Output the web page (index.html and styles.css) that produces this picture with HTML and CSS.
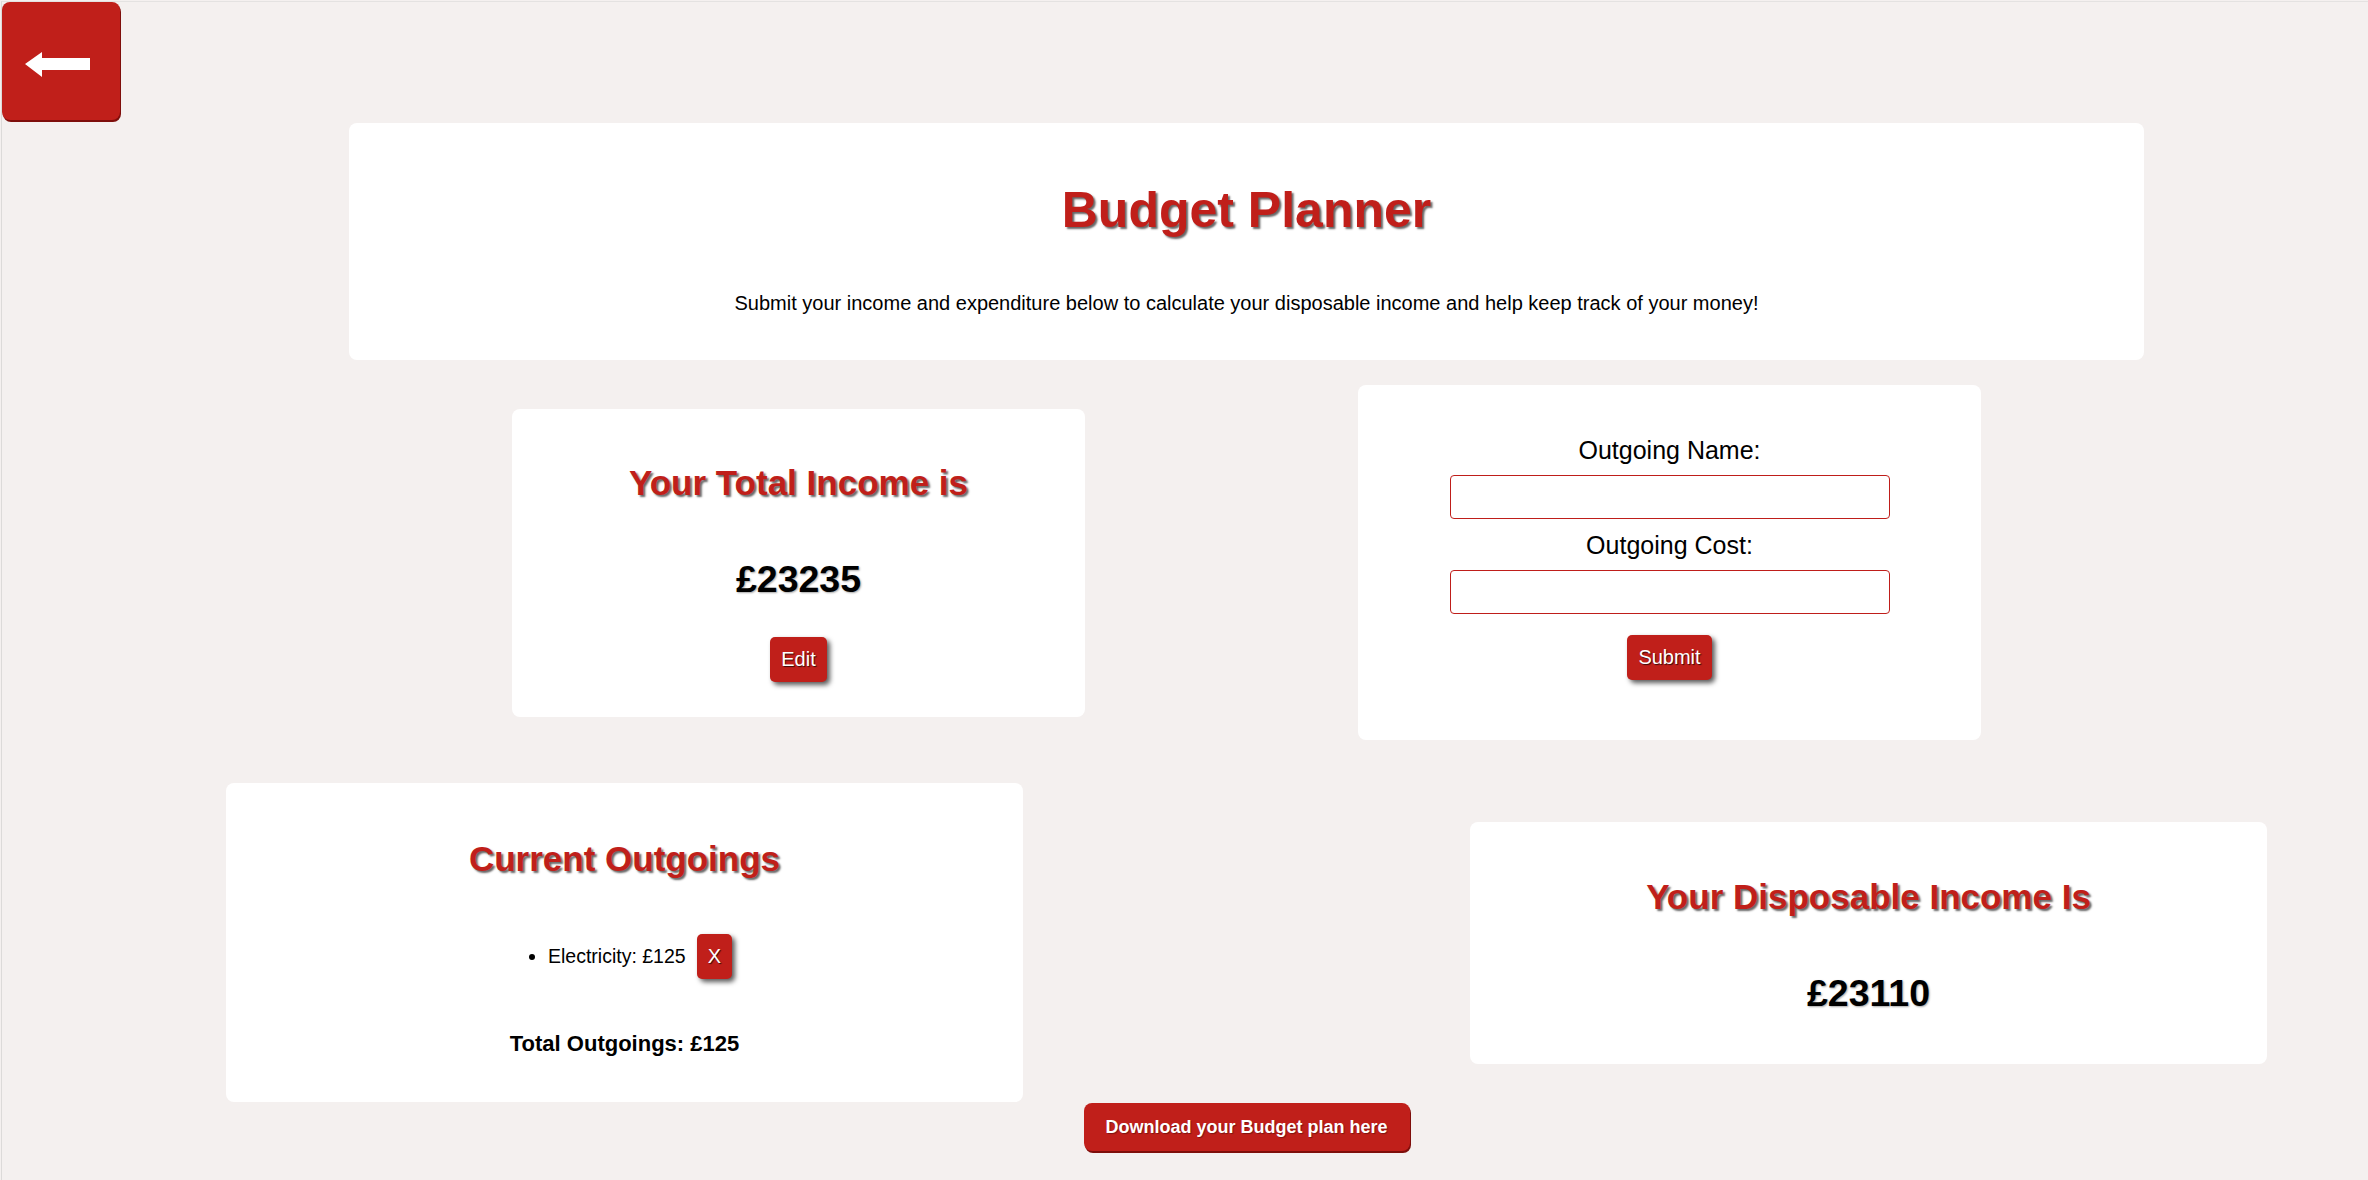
FILE: index.html
```html
<!DOCTYPE html>
<html lang="en">
<head>
<meta charset="utf-8">
<title>Budget Planner</title>
<link rel="stylesheet" href="styles.css">
</head>
<body>
<div class="page">
  <a class="back-btn" href="#" aria-label="Back">
    <svg viewBox="0 0 118 118" width="118" height="118" aria-hidden="true">
      <polygon points="23,62 40,50 40,56 88,56 88,68 40,68 40,75" fill="#ffffff"/>
    </svg>
  </a>
  <main class="main">
    <header class="card intro">
      <h1 class="page-title">Budget Planner</h1>
      <p class="intro-text">Submit your income and expenditure below to calculate your disposable income and help keep track of your money!</p>
    </header>

    <section class="row row-top">
      <div class="card income">
        <h2 class="card-title">Your Total Income is</h2>
        <p class="amount">£23235</p>
        <button class="btn btn-edit" type="button">Edit</button>
      </div>

      <form class="card outgoing-form">
        <label class="field-label" for="oname">Outgoing Name:</label>
        <input class="field-input" id="oname" type="text">
        <label class="field-label field-label-2" for="ocost">Outgoing Cost:</label>
        <input class="field-input" id="ocost" type="text">
        <button class="btn btn-submit" type="button">Submit</button>
      </form>
    </section>

    <section class="row row-bottom">
      <div class="card outgoings">
        <h2 class="card-title">Current Outgoings</h2>
        <ul class="outgoing-list">
          <li class="outgoing-item"><span class="outgoing-text">Electricity: £125</span><button class="btn btn-remove" type="button">X</button></li>
        </ul>
        <p class="total">Total Outgoings: £125</p>
      </div>

      <div class="card disposable">
        <h2 class="card-title">Your Disposable Income Is</h2>
        <p class="amount">£23110</p>
      </div>
    </section>

    <div class="download-wrap">
      <button class="download-btn" type="button">Download your Budget plan here</button>
    </div>
  </main>
</div>
</body>
</html>
```

FILE: styles.css
```css
* {
  box-sizing: border-box;
}

html, body {
  margin: 0;
  padding: 0;
}

body {
  background: #f4f0ef;
  font-family: "Liberation Sans", Arial, sans-serif;
  color: #000;
}

.page {
  margin: 1px 0 0 1px;
  border-left: 1px solid #dcdad9;
  border-top: 1px solid #e4e2e1;
  min-height: 1179px;
}

.back-btn {
  display: block;
  width: 118px;
  height: 118px;
  background: #c01f1a;
  border-radius: 8px;
  box-shadow: 1px 2px 0 #7e0e0b;
}

.back-btn svg {
  display: block;
}

.main {
  margin-left: 123px;
  display: flex;
  flex-direction: column;
  align-items: center;
}

.card {
  background: #ffffff;
  border-radius: 8px;
}

.intro {
  width: 80%;
  margin-top: 3px;
  padding: 59px 20px 45px;
  text-align: center;
}

.page-title {
  margin: 0;
  font-size: 50px;
  line-height: 57px;
  font-weight: bold;
  color: #c01f1a;
  text-shadow: 2px 2px 2px rgba(0, 0, 0, 0.6);
}

.intro-text {
  margin: 53px 0 0;
  font-size: 20px;
  line-height: 23px;
}

.row {
  display: flex;
  justify-content: center;
  align-items: center;
  width: 100%;
}

.row-top {
  margin-top: 25px;
  gap: 273px;
}

.row-bottom {
  margin-top: 43px;
  gap: 447px;
}

.income {
  width: 573px;
  padding: 54px 20px 35px;
  display: flex;
  flex-direction: column;
  align-items: center;
}

.card-title {
  margin: 0;
  font-size: 35px;
  line-height: 40px;
  font-weight: bold;
  color: #c01f1a;
  text-shadow: 2px 2px 2px rgba(0, 0, 0, 0.6);
  text-align: center;
}

.amount {
  margin: 55px 0 0;
  font-size: 37.5px;
  line-height: 43px;
  font-weight: bold;
  text-shadow: 1px 1px 2px rgba(0, 0, 0, 0.35);
  text-align: center;
}

.btn {
  height: 45px;
  padding: 0 11px;
  border: none;
  border-radius: 5px;
  background: #c01f1a;
  color: #ffffff;
  font-family: "Liberation Sans", Arial, sans-serif;
  font-size: 20px;
  text-shadow: 1px 1px 1px rgba(0, 0, 0, 0.7);
  box-shadow: 3px 3px 5px rgba(0, 0, 0, 0.65);
  cursor: pointer;
}

.btn-edit {
  margin-top: 36px;
}

.outgoing-form {
  width: 623px;
  padding: 51px 20px 60px;
  display: flex;
  flex-direction: column;
  align-items: center;
}

.field-label {
  font-size: 25px;
  line-height: 29px;
}

.field-label-2 {
  margin-top: 12px;
}

.field-input {
  margin-top: 10px;
  width: 440px;
  height: 44px;
  border: 1px solid #bf1e1a;
  border-radius: 4px;
  background: #fff;
  font-size: 20px;
  padding: 0 8px;
}

.btn-submit {
  margin-top: 21px;
}

.outgoings {
  width: 797px;
  padding: 56px 20px 46px;
  display: flex;
  flex-direction: column;
  align-items: center;
}

.outgoing-list {
  margin: 55px 0 0;
  padding: 0 0 0 12px;
  list-style: none;
}

.outgoing-item {
  display: flex;
  align-items: center;
  font-size: 19.5px;
}

.outgoing-item::before {
  content: "";
  width: 6px;
  height: 6px;
  border-radius: 50%;
  background: #000;
  margin-right: 13px;
  margin-top: 1px;
}

.btn-remove {
  margin-left: 11px;
}

.total {
  margin: 52px 0 0;
  font-size: 22px;
  line-height: 25px;
  font-weight: bold;
}

.disposable {
  width: 797px;
  padding: 55px 20px 49px;
}

.download-wrap {
  margin-top: 1px;
  display: flex;
  justify-content: center;
}

.download-btn {
  width: 326px;
  height: 48px;
  border: none;
  border-radius: 8px;
  background: #c01f1a;
  color: #fff;
  font-family: "Liberation Sans", Arial, sans-serif;
  font-size: 18px;
  font-weight: bold;
  text-shadow: 1px 1px 1px rgba(0, 0, 0, 0.35);
  box-shadow: 1px 2px 0 #7e0e0b;
  cursor: pointer;
}
```
